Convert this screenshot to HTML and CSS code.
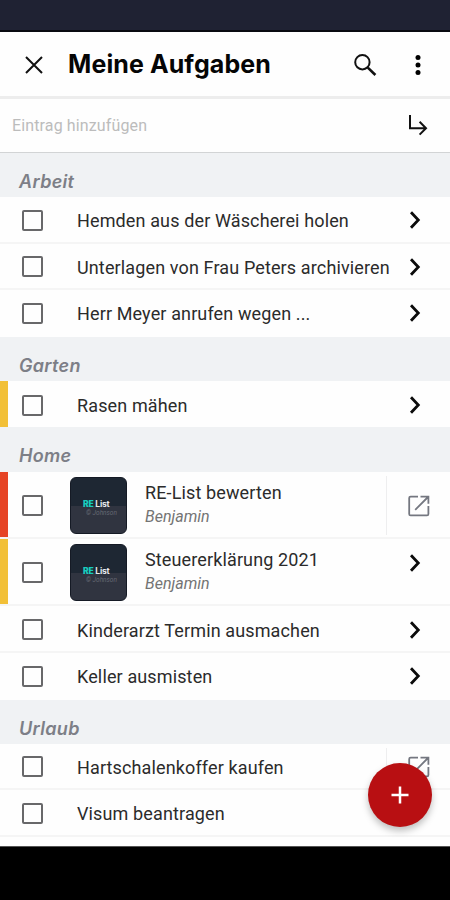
FILE: index.html
```html
<!DOCTYPE html>
<html lang="de">
<head>
<meta charset="utf-8">
<title>Meine Aufgaben</title>
<link rel="stylesheet" href="styles.css">
</head>
<body>
<svg class="defs" width="0" height="0">
  <symbol id="chevron" viewBox="0 0 12 20"><path d="M2 2.2 9.3 10 2 17.8" fill="none" stroke="#0b0b0b" stroke-width="2.8"/></symbol>
  <symbol id="open" viewBox="0 0 22 22"><path d="M10 1.6H2.6Q1.2 1.6 1.2 3V19Q1.2 20.4 2.6 20.4H19Q20.4 20.4 20.4 19V11M12.5 1.6H20.4V8.8M20 2 7.2 14.8" fill="none" stroke="#747780" stroke-width="1.8"/></symbol>
</svg>
<div class="screen">
  <div class="status"></div>
  <header class="bar">
    <svg class="close" viewBox="0 0 20 20"><path d="M2 2 18 18M18 2 2 18" fill="none" stroke="#111" stroke-width="2"/></svg>
    <h1 class="title">Meine Aufgaben</h1>
    <svg class="search" viewBox="0 0 24 24"><circle cx="9.4" cy="9.2" r="7.2" fill="none" stroke="#111" stroke-width="2"/><path d="m14.8 14.6 7.6 7.4" stroke="#111" stroke-width="2.6"/></svg>
    <svg class="more" viewBox="0 0 6 22"><circle cx="3" cy="3.5" r="2.5"/><circle cx="3" cy="11" r="2.5"/><circle cx="3" cy="18.5" r="2.5"/></svg>
  </header>
  <div class="add">
    <span class="hint">Eintrag hinzufügen</span>
    <svg class="enter" viewBox="0 0 20 22"><path d="M2 1V14.2H17.5M11.6 7.8 18 14.2 11.6 20.6" fill="none" stroke="#111" stroke-width="2"/></svg>
  </div>
  <main class="list">
    <h2 class="group">Arbeit</h2>
    <div class="row"><i class="box"></i><span class="text">Hemden aus der Wäscherei holen</span><svg class="chev"><use href="#chevron"/></svg></div>
    <div class="row"><i class="box"></i><span class="text">Unterlagen von Frau Peters archivieren</span><svg class="chev"><use href="#chevron"/></svg></div>
    <div class="row last"><i class="box"></i><span class="text">Herr Meyer anrufen wegen ...</span><svg class="chev"><use href="#chevron"/></svg></div>
    <h2 class="group">Garten</h2>
    <div class="row last yellow"><i class="box"></i><span class="text">Rasen mähen</span><svg class="chev"><use href="#chevron"/></svg></div>
    <h2 class="group home">Home</h2>
    <div class="row tall red"><i class="box"></i><div class="thumb"><p class="logo"><b>RE</b> List</p><p class="sub">© Johnson</p></div><div class="info"><span class="text">RE-List bewerten</span><em>Benjamin</em></div><div class="side"><svg class="open"><use href="#open"/></svg></div></div>
    <div class="row tall yellow"><i class="box"></i><div class="thumb"><p class="logo"><b>RE</b> List</p><p class="sub">© Johnson</p></div><div class="info"><span class="text">Steuererklärung 2021</span><em>Benjamin</em></div><svg class="chev up"><use href="#chevron"/></svg></div>
    <div class="row"><i class="box"></i><span class="text">Kinderarzt Termin ausmachen</span><svg class="chev"><use href="#chevron"/></svg></div>
    <div class="row last"><i class="box"></i><span class="text">Keller ausmisten</span><svg class="chev"><use href="#chevron"/></svg></div>
    <h2 class="group">Urlaub</h2>
    <div class="row"><i class="box"></i><span class="text">Hartschalenkoffer kaufen</span><div class="side"><svg class="open"><use href="#open"/></svg></div></div>
    <div class="row"><i class="box"></i><span class="text">Visum beantragen</span></div>
  </main>
  <div class="nav"></div>
  <div class="fab"><svg viewBox="0 0 18 18"><path d="M9 .5V17.5M.5 9H17.5" stroke="#fff" stroke-width="2.5"/></svg></div>
</div>
</body>
</html>
```
FILE: styles.css
```css
* { box-sizing: border-box; margin: 0; padding: 0; }
body { background: #000; font-family: Roboto, "Liberation Sans", sans-serif; }
svg { display: block; flex: none; }
.defs { position: absolute; }
.screen { position: relative; width: 450px; height: 900px; overflow: hidden; background: #fefefe; display: flex; flex-direction: column; }
.status { height: 32px; flex: none; background: #1f2233; border-bottom: 2px solid #090b11; }
.bar { height: 67px; flex: none; display: flex; align-items: center; padding: 0 29px 1px 24px; border-bottom: 3px solid #ededed; }
.close { width: 20px; height: 20px; margin-top: 2px; }
.title { margin-left: 24px; flex: 1; font: 700 25px/30px Inter, sans-serif; letter-spacing: .1px; color: #050505; white-space: nowrap; }
.search { width: 24px; height: 24px; margin: 2px 38px 0 0; }
.more { width: 6px; height: 22px; margin-top: 2px; }
.add { height: 54px; flex: none; display: flex; align-items: center; justify-content: space-between; padding: 0 22px 0 12px; border-bottom: 1px solid #d2d4d5; }
.hint { font-size: 16px; color: #bcbcbc; letter-spacing: .13px; }
.enter { width: 20px; height: 22px; margin-bottom: 2px; }
.list { flex: none; height: 693px; }
.group { height: 44px; padding: 18px 0 0 19px; background: #f0f2f4; font: italic 600 18px/22px Inter, sans-serif; color: #7d7f87; letter-spacing: .3px; }
.home { height: 45px; }
.row { height: 46.6px; display: flex; align-items: center; padding-left: 22px; border-bottom: 2px solid #f5f5f5; }
.row.last { border-bottom-color: #fefefe; }
.row.last.yellow { border-bottom: 0; }
.row.tall { height: 67px; }
.yellow { box-shadow: inset 8px 0 #f2c037; }
.red { box-shadow: inset 8px 0 #e64425; }
.box { width: 21px; height: 21px; flex: none; border: 2px solid #68686a; border-radius: 2px; position: relative; top: 1px; }
.text { margin-left: 34px; font-size: 18px; line-height: 24px; color: #2b2b2b; white-space: nowrap; letter-spacing: .13px; flex: 1; position: relative; top: 2px; }
.chev { width: 12px; height: 20px; margin-right: 29px; position: relative; top: 1px; }
.up { top: -9px; }
.thumb { width: 57px; height: 57px; flex: none; margin: 1px 0 0 27px; border-radius: 6px; border: 1px solid #151a25; background: linear-gradient(#1e2733 50%, #303440 50%); padding-top: 22px; }
.logo { margin-left: 12px; font: 700 8.5px/9px Inter, sans-serif; color: #e6e9ec; letter-spacing: -.2px; }
.logo b { font-weight: 900; color: #18cbbd; }
.sub { margin-left: 15px; font: italic 6.5px/9px Roboto, sans-serif; color: #656973; }
.info { margin-left: 18px; flex: 1; display: flex; flex-direction: column; padding-bottom: 3px; }
.info .text { margin: 0; flex: none; top: 1px; }
.info em { font-size: 16px; line-height: 22px; color: #747474; position: relative; top: 2px; }
.side { align-self: stretch; width: 64px; flex: none; margin: 4px 0 2px; border-left: 1px solid #eeeeef; display: flex; align-items: center; padding-left: 21px; }
.open { width: 22px; height: 22px; }
.nav { height: 55px; flex: none; background: #000; margin-top: auto; border-top: 1px solid #555; }
.fab { position: absolute; left: 368px; top: 763px; width: 64px; height: 64px; border-radius: 50%; background: #b80f12; box-shadow: 0 4px 7px rgba(0,0,0,.25); display: flex; align-items: center; justify-content: center; }
.fab svg { width: 18px; height: 18px; }
```
